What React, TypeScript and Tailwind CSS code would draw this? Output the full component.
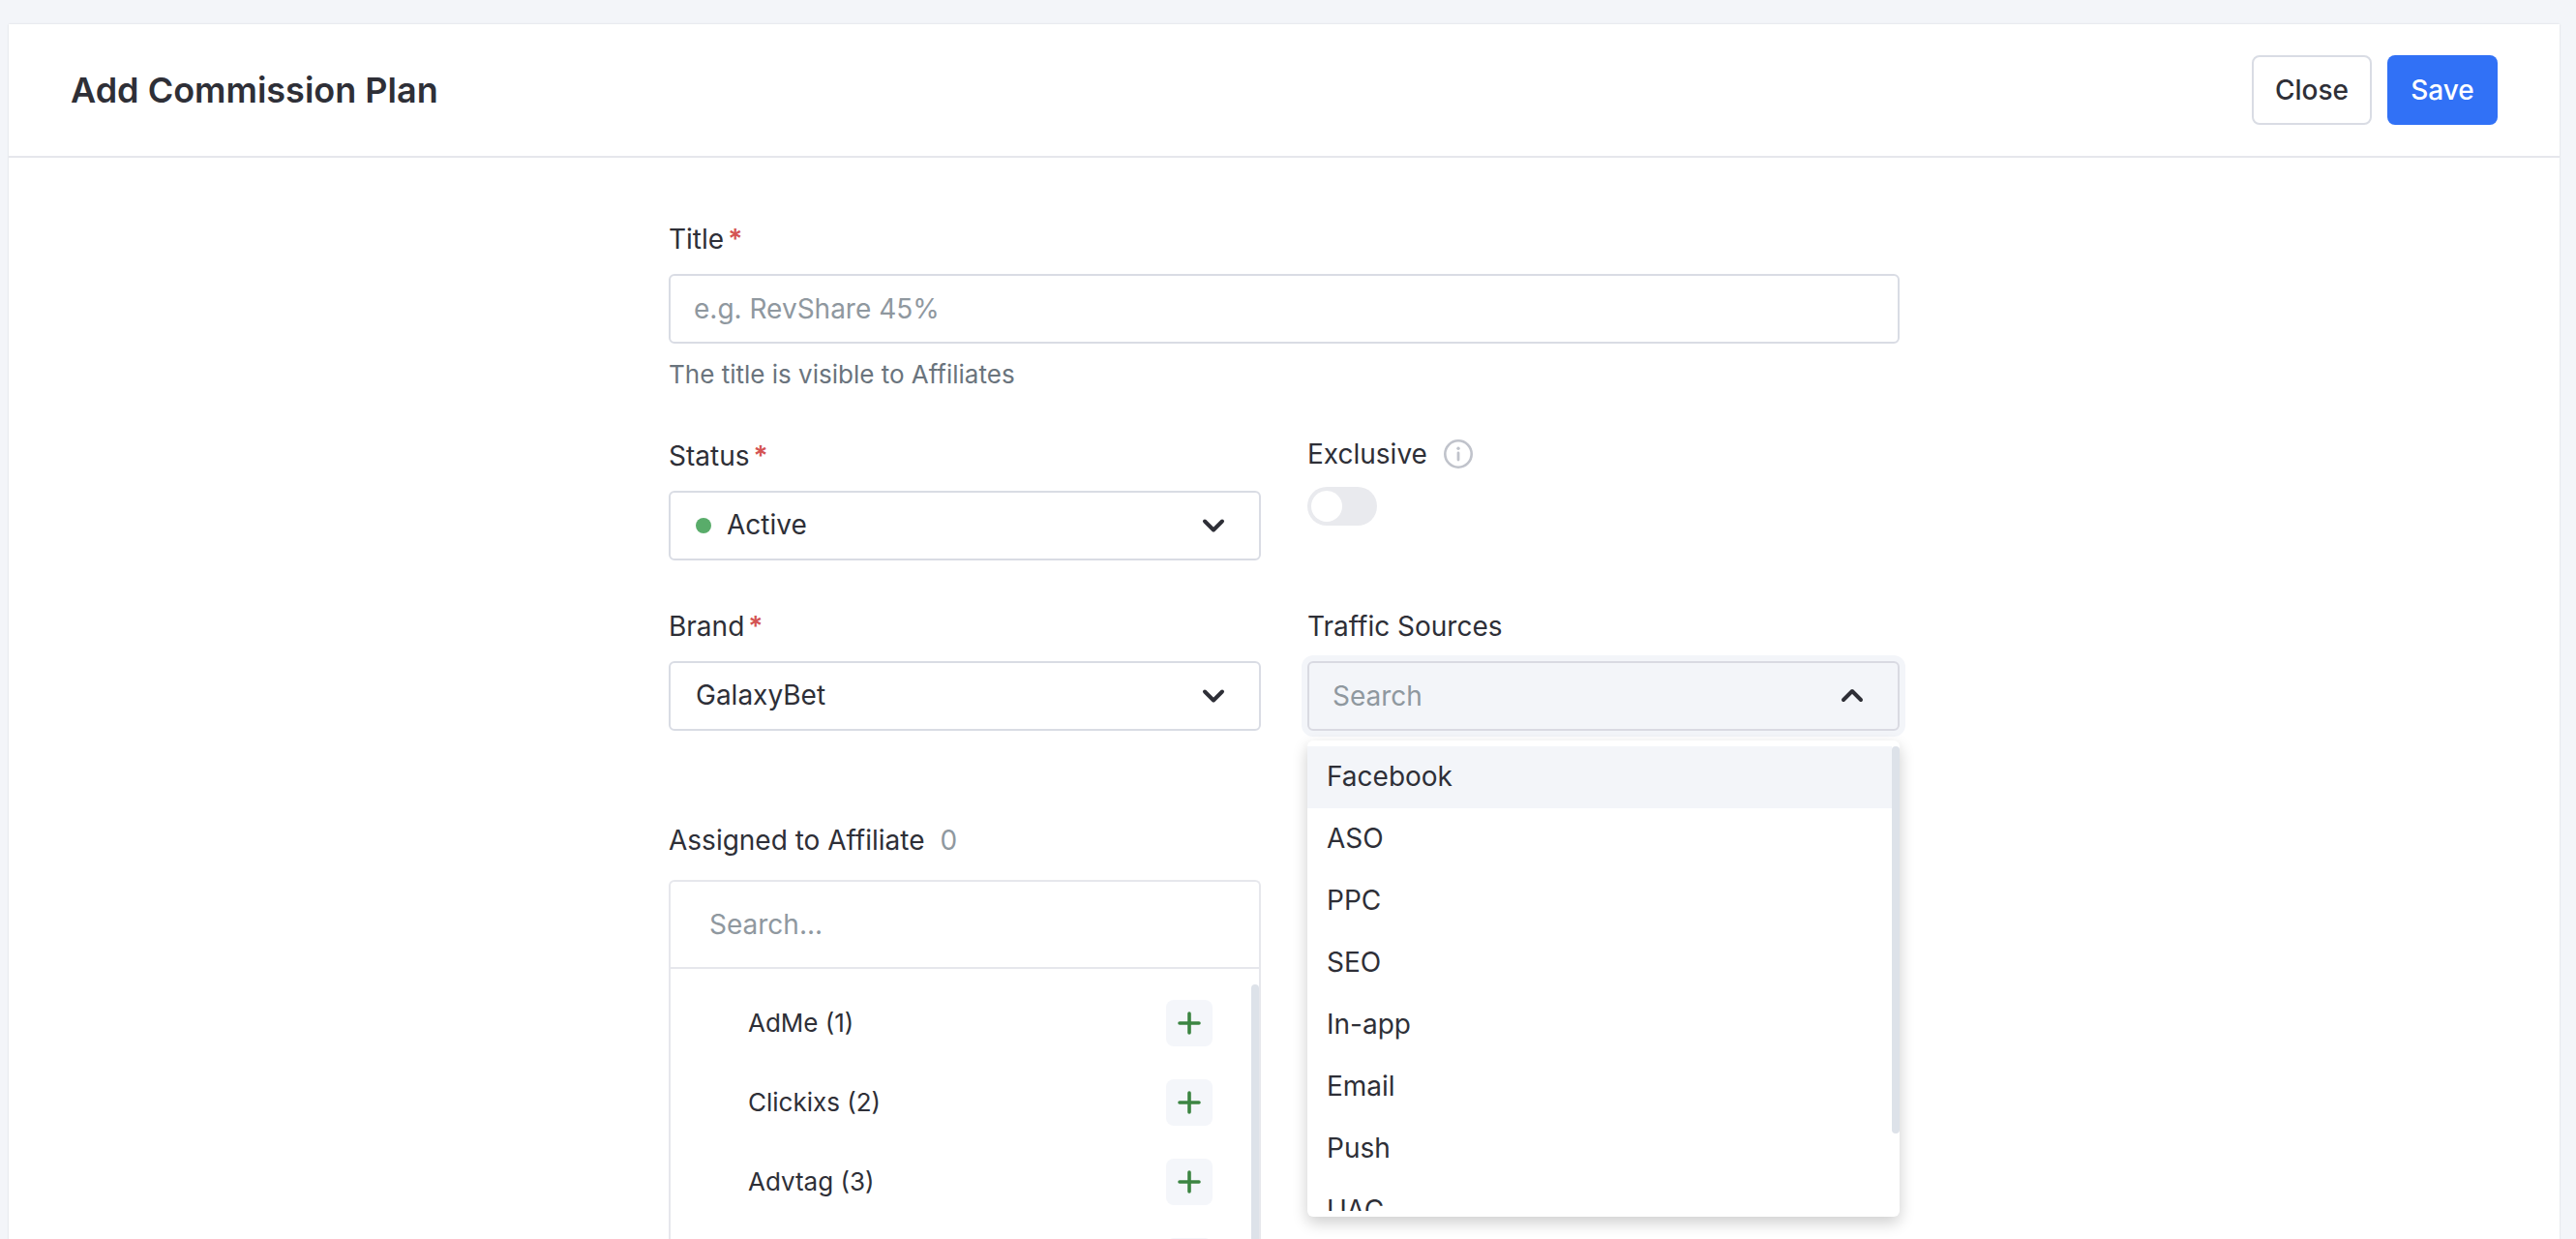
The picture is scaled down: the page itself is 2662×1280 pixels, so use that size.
import React, { useState } from 'react';

const trafficSources = ['Facebook', 'ASO', 'PPC', 'SEO', 'In-app', 'Email', 'Push', 'UAC'];

interface Affiliate {
  id: number;
  name: string;
}

const affiliates: Affiliate[] = [
  { id: 1, name: 'AdMe (1)' },
  { id: 2, name: 'Clickixs (2)' },
  { id: 3, name: 'Advtag (3)' },
  { id: 4, name: '' },
];

function Label({ children, required }: { children: React.ReactNode; required?: boolean }) {
  return (
    <div className="flex h-10 items-center text-[28px] leading-10">
      {children}
      {required && <span className="ml-1 font-semibold text-[#d45453]">*</span>}
    </div>
  );
}

function Chevron({ up }: { up?: boolean }) {
  return (
    <svg width="24" height="16" viewBox="0 0 24 16" fill="none" className="mr-[35px]">
      <path
        d={up ? 'M3 12L12 3L21 12' : 'M3 3.5L12 12.5L21 3.5'}
        stroke="#2e2f37"
        strokeWidth="4"
        strokeLinecap="round"
        strokeLinejoin="round"
      />
    </svg>
  );
}

export default function App() {
  const [exclusive, setExclusive] = useState(false);

  return (
    <div className="h-[1280px] w-[2662px] overflow-hidden bg-[#f3f5f9] pt-[25px] pr-[17px] pl-[9px] font-['Inter',sans-serif] text-[28px] text-[#2e2f37]">
      <div className="h-[1400px] bg-white shadow-[0_0_2px_rgba(0,0,0,0.12)]">
        {/* Header */}
        <div className="flex h-[138px] items-center justify-between border-b-2 border-[#e6e7ec] px-16">
          <h1 className="text-[36px] font-semibold">Add Commission Plan</h1>
          <div className="flex gap-4">
            <button className="h-[72px] w-[124px] rounded-lg border-2 border-[#d9dce4] font-medium">Close</button>
            <button className="h-[72px] w-[114px] rounded-lg bg-[#3171f6] font-medium text-white">Save</button>
          </div>
        </div>

        {/* Form */}
        <div className="ml-[682px] w-[1272px] pt-16">
          <Label required>Title</Label>
          <input
            className="mt-4 block h-[72px] w-full rounded-md border-2 border-[#d9dce4] px-6 placeholder:text-[#8f989f]"
            placeholder="e.g. RevShare 45%"
          />
          <p className="mt-3 text-[26px] leading-10 text-[#6a747d]">The title is visible to Affiliates</p>

          <div className="mt-[42px] grid grid-cols-2 gap-x-12">
            <div className="h-44 pt-0.5">
              <Label required>Status</Label>
              <div className="mt-4 flex h-[72px] items-center justify-between rounded-md border-2 border-[#d9dce4] pl-[26px]">
                <div className="flex items-center">
                  <span className="mr-4 h-4 w-4 rounded-full bg-[#59ac6a]"></span>
                  <span className="pb-0.5">Active</span>
                </div>
                <Chevron />
              </div>
            </div>

            <div className="h-44">
              <div className="flex items-center">
                <Label>Exclusive</Label>
                <svg width="30" height="30" viewBox="0 0 30 30" fill="none" className="ml-[17px]">
                  <circle cx="15" cy="15" r="13.7" stroke="#c0c3cb" strokeWidth="2.6" />
                  <circle cx="15" cy="9.2" r="1.7" fill="#c0c3cb" />
                  <path d="M15 14V21" stroke="#c0c3cb" strokeWidth="2.8" strokeLinecap="round" />
                </svg>
              </div>
              <button
                onClick={() => setExclusive(!exclusive)}
                className={`mt-3.5 flex h-10 w-[72px] items-center rounded-full p-1 ${
                  exclusive ? 'justify-end bg-[#3171f6]' : 'bg-[#e9eaee]'
                }`}
              >
                <span className="h-8 w-8 rounded-full bg-white"></span>
              </button>
            </div>

            <div className="pt-0.5">
              <Label required>Brand</Label>
              <div className="mt-4 flex h-[72px] items-center justify-between rounded-md border-2 border-[#d9dce4] pl-[26px]">
                <span className="pb-0.5">GalaxyBet</span>
                <Chevron />
              </div>
            </div>

            <div className="pt-0.5">
              <Label>Traffic Sources</Label>
              <div className="relative mt-4">
                <div className="flex h-[72px] items-center justify-between rounded-md border-2 border-[#d9dae2] bg-[#f3f5f9] pl-6 shadow-[0_0_0_6px_#f3f5f9]">
                  <span className="text-[#8f989f]">Search</span>
                  <Chevron up />
                </div>

                {/* Options menu */}
                <div className="absolute top-[82px] left-0 z-10 w-full rounded-md bg-white py-1.5 shadow-[0_6px_16px_rgba(0,0,0,0.2)]">
                  <div className="flex h-[480px] overflow-hidden">
                    <ul className="flex-1">
                      {trafficSources.map((source, index) => (
                        <li
                          key={source}
                          className={`h-16 px-5 leading-[62px] ${index === 0 ? 'bg-[#f3f5f9]' : ''}`}
                        >
                          {source}
                        </li>
                      ))}
                    </ul>
                    <div className="h-[400px] w-2 rounded-full bg-[#dde2e9]"></div>
                  </div>
                </div>
              </div>
            </div>
          </div>

          {/* Affiliates */}
          <div className="mt-[93px] w-[612px]">
            <div className="flex">
              <Label>Assigned to Affiliate</Label>
              <span className="ml-4 leading-10 text-[#8f989f]">0</span>
            </div>
            <div className="mt-[21px] rounded-t-md border-2 border-b-0 border-[#e6e7ec]">
              <input
                className="block h-[90px] w-full border-b-2 border-[#e6e7ec] px-10 placeholder:text-[#8f989f]"
                placeholder="Search..."
              />
              <div className="flex pt-[15px]">
                <ul className="flex-1">
                  {affiliates.map(affiliate => (
                    <li key={affiliate.id} className="flex h-[82px] items-center justify-between pr-10 pl-20 text-[26px]">
                      <span className="pb-0.5">{affiliate.name}</span>
                      <button className="flex h-12 w-12 items-center justify-center rounded-lg bg-[#f4f6fa]">
                        <svg width="24" height="24" viewBox="0 0 24 24" fill="none">
                          <path d="M12 2V22M2 12H22" stroke="#3c8542" strokeWidth="3.6" strokeLinecap="round" />
                        </svg>
                      </button>
                    </li>
                  ))}
                </ul>
                <div className="mt-px w-2 rounded-t-full bg-[#dde2e9]"></div>
              </div>
            </div>
          </div>
        </div>
      </div>
    </div>
  );
}
